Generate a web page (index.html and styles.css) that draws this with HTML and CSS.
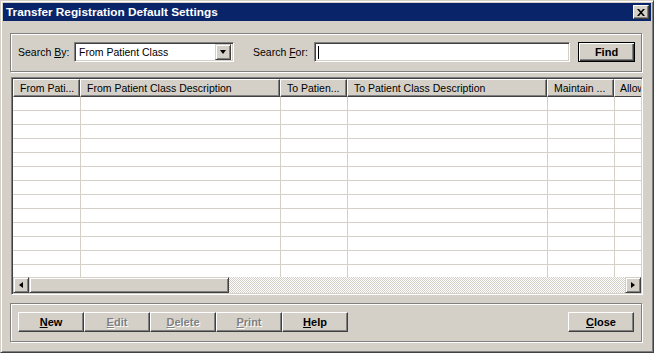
FILE: index.html
```html
<!DOCTYPE html>
<html lang="en">

<head>
    <meta charset="UTF-8">
    <title>Transfer Registration Default Settings</title>
    <link rel="stylesheet" href="styles.css">
</head>

<body>
    <div class="window">
        <div class="titlebar">
            <span class="title">Transfer Registration Default Settings</span>
            <button class="title-close" aria-label="Close">
                <svg width="8" height="7" viewBox="0 0 8 7">
                    <path d="M0 0h2l2 2.3L6 0h2L5 3.5 8 7H6L4 4.7 2 7H0l3-3.5z" fill="#000" />
                </svg>
            </button>
        </div>

        <div class="group search-group">
            <label class="field-label label-by">Search <u>B</u>y:</label>
            <div class="combo">
                <span class="combo-text">From Patient Class</span>
                <span class="combo-btn"><span class="arrow-down"></span></span>
            </div>
            <label class="field-label label-for">Search <u>F</u>or:</label>
            <div class="textbox"><span class="caret"></span></div>
            <button class="btn btn-default">Find</button>
        </div>

        <div class="grid">
            <div class="grid-head">
                <div class="head-cell">From Pati...</div>
                <div class="head-cell">From Patient Class Description</div>
                <div class="head-cell">To Patien...</div>
                <div class="head-cell">To Patient Class Description</div>
                <div class="head-cell">Maintain ...</div>
                <div class="head-cell head-last">Allow</div>
            </div>
            <div class="grid-body" id="gridBody"></div>
            <div class="hscroll">
                <span class="scroll-btn"><span class="arrow-left"></span></span>
                <span class="scroll-thumb"></span>
                <span class="scroll-track"></span>
                <span class="scroll-btn"><span class="arrow-right"></span></span>
            </div>
        </div>

        <div class="group button-group">
            <button class="btn"><u>N</u>ew</button>
            <button class="btn" disabled><u>E</u>dit</button>
            <button class="btn" disabled><u>D</u>elete</button>
            <button class="btn" disabled><u>P</u>rint</button>
            <button class="btn"><u>H</u>elp</button>
            <button class="btn btn-close"><u>C</u>lose</button>
        </div>
    </div>

    <script>
        const body = document.getElementById('gridBody');
        for (let r = 0; r < 13; r++) {
            const row = document.createElement('div');
            row.className = 'grid-row';
            for (let c = 0; c < 6; c++) {
                const cell = document.createElement('div');
                cell.className = 'cell';
                row.appendChild(cell);
            }
            body.appendChild(row);
        }
    </script>
</body>

</html>
```

FILE: styles.css
```css
body {
    margin: 0;
    font-family: "Liberation Sans", Arial, sans-serif;
    font-size: 10.5px;
    color: #000;
    background: #d4d0c8;
}

.window {
    width: 654px;
    height: 353px;
    box-sizing: border-box;
    background: #d4d0c8;
    border: 1px solid;
    border-color: #d4d0c8 #404040 #404040 #d4d0c8;
    box-shadow: inset 1px 1px #fff, inset -1px -1px #808080;
    padding: 2px;
}

.titlebar {
    height: 18px;
    background: #0a246a;
    display: flex;
    align-items: center;
    justify-content: space-between;
    padding: 0 2px 0 3px;
}

.title {
    color: #fff;
    font-weight: bold;
    font-size: 11.8px;
}

.title-close {
    width: 16px;
    height: 14px;
    padding: 0;
    background: #d4d0c8;
    border: 1px solid;
    border-color: #fff #404040 #404040 #fff;
    box-shadow: inset -1px -1px #808080;
    display: flex;
    align-items: center;
    justify-content: center;
}

.group {
    margin: 0 0 0 7px;
    width: 632px;
    box-sizing: border-box;
    border: 1px solid #808080;
    box-shadow: 1px 1px 0 #fff, inset 1px 1px 0 #fff;
    display: flex;
    align-items: center;
    padding: 8px 6px 9px 7px;
}

.search-group {
    margin-top: 12px;
}

.field-label {
    white-space: nowrap;
}

.label-by {
    width: 56px;
}

.label-for {
    width: 61px;
    margin-left: 19px;
}

u {
    text-decoration: underline;
    text-underline-offset: 1px;
}

.combo,
.textbox {
    height: 20px;
    box-sizing: border-box;
    background: #fff;
    border: 1px solid;
    border-color: #808080 #fff #fff #808080;
    box-shadow: inset 1px 1px #404040, inset -1px -1px #d4d0c8;
    padding: 2px;
    display: flex;
    align-items: center;
}

.combo {
    width: 160px;
}

.combo-text {
    flex: 1;
    padding-left: 2px;
}

.combo-btn {
    width: 16px;
    height: 16px;
    box-sizing: border-box;
    background: #d4d0c8;
    border: 1px solid;
    border-color: #d4d0c8 #404040 #404040 #d4d0c8;
    box-shadow: inset 1px 1px #fff, inset -1px -1px #808080;
    display: flex;
    align-items: center;
    justify-content: center;
}

.arrow-down {
    width: 0;
    height: 0;
    border-left: 3.5px solid transparent;
    border-right: 3.5px solid transparent;
    border-top: 4px solid #000;
}

.textbox {
    width: 256px;
}

.caret {
    width: 1px;
    height: 13px;
    background: #000;
    margin-left: 1px;
}

.btn {
    height: 20px;
    width: 66px;
    box-sizing: border-box;
    padding: 0;
    font-family: "Liberation Sans", Arial, sans-serif;
    font-size: 11px;
    font-weight: bold;
    color: #000;
    background: #d4d0c8;
    border: 1px solid;
    border-color: #fff #404040 #404040 #fff;
    box-shadow: inset -1px -1px #808080;
}

.btn:disabled {
    color: #808080;
    text-shadow: 1px 1px 0 #fff;
}

.btn-default {
    width: 57px;
    margin-left: 8px;
    border: 1px solid #000;
    box-shadow: inset 1px 1px #fff, inset -1px -1px #404040, inset -2px -2px #808080;
}

.btn-close {
    margin-left: auto;
    margin-right: 1px;
}

.grid {
    margin: 5px 0 0 8px;
    width: 632px;
    height: 218px;
    box-sizing: border-box;
    border: 1px solid;
    border-color: #808080 #fff #fff #808080;
    box-shadow: inset 1px 1px #404040, inset -1px -1px #d4d0c8;
    padding: 1px;
    background: #fff;
    display: flex;
    flex-direction: column;
    overflow: hidden;
}

.grid-head,
.grid-row {
    display: grid;
    grid-template-columns: 67px 200px 67px 200px 67px 27px;
}

.grid-head {
    height: 18px;
    flex: none;
}

.head-cell {
    background: #d4d0c8;
    box-sizing: border-box;
    border: 1px solid;
    border-color: #fff #404040 #404040 #fff;
    box-shadow: inset -1px -1px #808080;
    padding: 0 0 0 6px;
    line-height: 16px;
    white-space: nowrap;
    overflow: hidden;
}

.head-last {
    border-right: none;
    box-shadow: none;
    border-bottom-color: #404040;
    padding-left: 5px;
}

.grid-body {
    height: 180px;
    flex: none;
    overflow: hidden;
}

.grid-row {
    height: 14px;
}

.cell {
    box-sizing: border-box;
    border-bottom: 1px solid #d4d0c8;
}

.cell + .cell {
    border-left: 1px solid #d4d0c8;
}

.hscroll {
    height: 16px;
    flex: none;
    display: flex;
}

.scroll-btn,
.scroll-thumb {
    height: 16px;
    box-sizing: border-box;
    background: #d4d0c8;
    border: 1px solid;
    border-color: #d4d0c8 #404040 #404040 #d4d0c8;
    box-shadow: inset 1px 1px #fff, inset -1px -1px #808080;
}

.scroll-btn {
    width: 16px;
    display: flex;
    align-items: center;
    justify-content: center;
}

.scroll-thumb {
    width: 200px;
}

.scroll-track {
    flex: 1;
    background: repeating-conic-gradient(#fff 0 25%, #d4d0c8 0 50%) 0 0 / 2px 2px;
}

.arrow-left,
.arrow-right {
    width: 0;
    height: 0;
    border-top: 3.5px solid transparent;
    border-bottom: 3.5px solid transparent;
}

.arrow-left {
    border-right: 4px solid #000;
}

.arrow-right {
    border-left: 4px solid #000;
}

.button-group {
    margin-top: 8px;
}
```
